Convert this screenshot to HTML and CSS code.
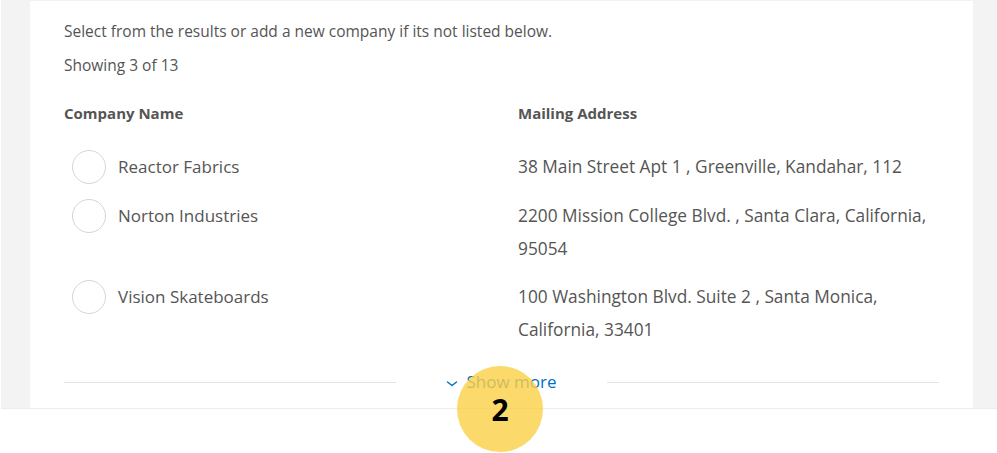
FILE: index.html
```html
<!DOCTYPE html>
<html lang="en">
<head>
<meta charset="utf-8">
<title>Select company</title>
<link rel="stylesheet" href="styles.css">
</head>
<body>
<div class="page">
  <section class="card">
    <p class="intro">Select from the results or add a new company if its not listed below.</p>
    <p class="count">Showing 3 of 13</p>
    <div class="grid head">
      <div class="th">Company Name</div>
      <div class="th">Mailing Address</div>
    </div>
    <div class="rows">
      <div class="grid row">
        <label class="name"><span class="radio"></span>Reactor Fabrics</label>
        <div class="addr">38 Main Street Apt 1 , Greenville, Kandahar, 112</div>
      </div>
      <div class="grid row">
        <label class="name"><span class="radio"></span>Norton Industries</label>
        <div class="addr">2200 Mission College Blvd. , Santa Clara, California, 95054</div>
      </div>
      <div class="grid row">
        <label class="name"><span class="radio"></span>Vision Skateboards</label>
        <div class="addr">100 Washington Blvd. Suite 2 , Santa Monica, California, 33401</div>
      </div>
    </div>
    <div class="more">
      <span class="rule"></span>
      <a class="more-link" href="#"><svg class="chev" width="12" height="8" viewBox="0 0 12 8"><path d="M1.5 2 L6 5.5 L10.5 2" fill="none" stroke="#0071c5" stroke-width="1.4" stroke-linecap="round" stroke-linejoin="round"/></svg>Show more</a>
      <span class="rule"></span>
    </div>
  </section>
</div>
<div class="badge">2</div>
</body>
</html>
```

FILE: styles.css
```css
* { box-sizing: border-box; }
html, body { margin: 0; padding: 0; }
body {
  width: 997px;
  height: 453px;
  background: #ffffff;
  font-family: "Open Sans", "Noto Sans", sans-serif;
  color: #555;
  position: relative;
  overflow: hidden;
}
.page {
  margin-left: 1px;
  height: 409px;
  background: #f3f3f3;
  padding: 1px 24px 0 29px;
  border-bottom: 1px solid #ececec;
}
.card {
  background: #fff;
  height: 407px;
  padding: 19px 34px 0 34px;
}
.intro, .count {
  margin: 0;
  font-size: 15.5px;
  line-height: 22px;
}
.count { margin-top: 12px; }
.grid {
  display: grid;
  grid-template-columns: 454px 1fr;
}
.head { margin-top: 26px; }
.th {
  font-size: 15px;
  font-weight: 700;
  line-height: 22px;
  color: #555;
}
.rows {
  margin-top: 26px;
  display: flex;
  flex-direction: column;
  gap: 15px;
}
.row {
  font-size: 17px;
  line-height: 33px;
}
.addr { font-size: 17.3px; }
.name {
  display: flex;
  align-items: flex-start;
  gap: 12px;
  padding-left: 8px;
}
.radio {
  width: 34px;
  height: 34px;
  border: 1px solid #d6d6d6;
  border-radius: 50%;
  flex: none;
}
.more {
  display: flex;
  align-items: center;
  margin-top: 25px;
}
.rule {
  flex: 1;
  height: 1px;
  background: #e4e4e4;
}
.more-link {
  margin: 0 50px 0 50px;
  display: flex;
  align-items: center;
  gap: 8px;
  color: #0071c5;
  text-decoration: none;
  font-size: 17px;
  line-height: 22px;
}
.chev { margin-top: 3px; }
.badge {
  position: absolute;
  left: 457px;
  top: 366px;
  width: 86px;
  height: 86px;
  border-radius: 50%;
  background: rgba(251, 208, 70, 0.8);
  color: #000;
  font-family: "Open Sans", sans-serif;
  font-weight: 700;
  font-size: 30px;
  display: flex;
  align-items: center;
  justify-content: center;
}
```
